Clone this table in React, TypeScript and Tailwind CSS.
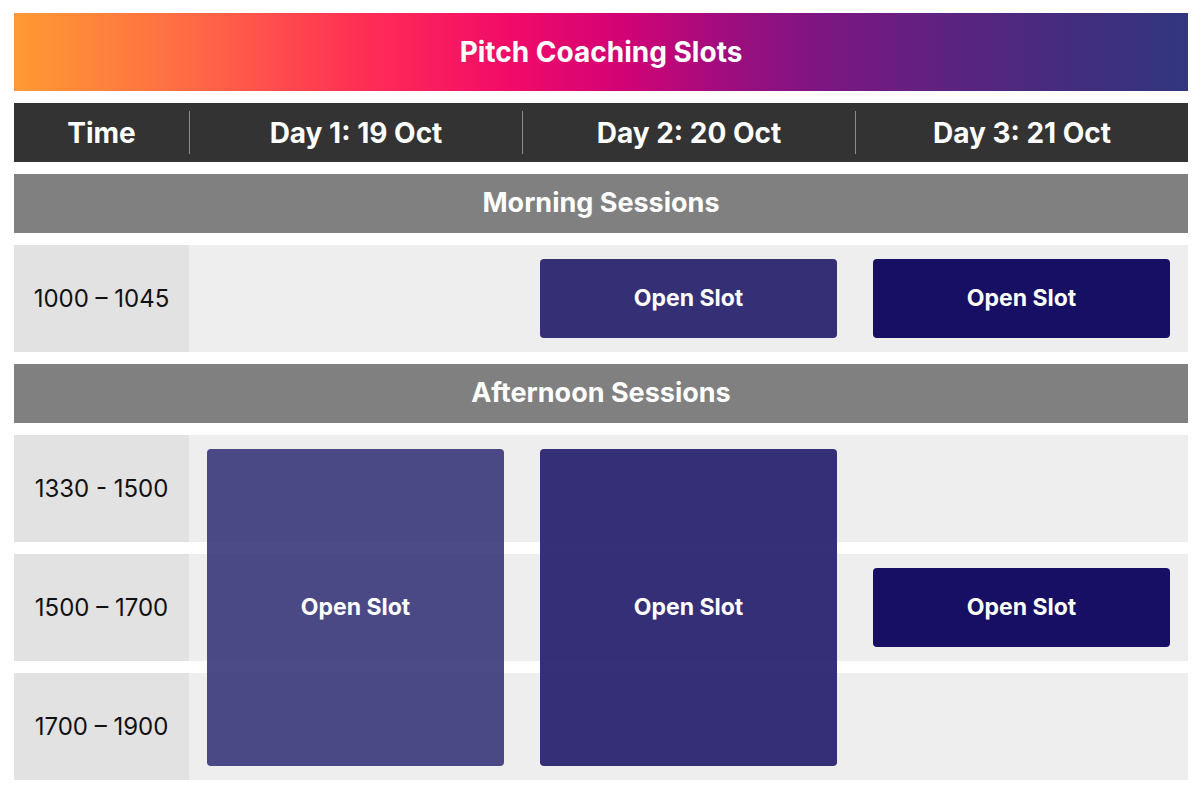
const days = ["Day 1: 19 Oct", "Day 2: 20 Oct", "Day 3: 21 Oct"];

const font = { fontFamily: "Inter, 'Open Sans', sans-serif" };

const SectionBar = ({ title }: { title: string }) => (
  <div className="h-[59px] bg-[#808080] flex items-center justify-center text-white font-bold text-[27px]">
    {title}
  </div>
);

const TimeCell = ({ label, className = "" }: { label: string; className?: string }) => (
  <div className={`bg-[#e2e2e2] flex items-center justify-center text-[24px] text-[#111] ${className}`}>
    {label}
  </div>
);

const Slot = ({ className = "" }: { className?: string }) => (
  <div className={`rounded-[4px] flex items-center justify-center text-white font-bold text-[23px] mx-[18px] ${className}`}>
    Open Slot
  </div>
);

export default function App() {
  return (
    <div className="w-[1200px] h-[794px] bg-white pl-[14px] pr-[12px] pt-[13px] overflow-hidden" style={font}>
      <div className="flex flex-col gap-[12px]">
        {/* Title */}
        <div className="h-[78px] flex items-center justify-center text-white font-bold text-[28px] bg-[linear-gradient(90deg,#ff9a33_0%,#ff6a45_15%,#ff2d55_30%,#f20b68_42%,#d20375_52%,#a30c7e_60%,#801582_68%,#5b2380_80%,#432c7d_90%,#32367f_100%)]">
          Pitch Coaching Slots
        </div>

        {/* Column headings */}
        <div className="h-[59px] bg-[#333333] grid grid-cols-[175px_1fr_1fr_1fr] text-white font-bold text-[28px]">
          <div className="flex items-center justify-center">Time</div>
          {days.map((d) => (
            <div key={d} className="my-[8px] border-l border-[#8c8c8c] flex items-center justify-center">
              {d}
            </div>
          ))}
        </div>

        <SectionBar title="Morning Sessions" />

        <div className="h-[107px] grid grid-cols-[175px_1fr_1fr_1fr] bg-[#eeeeee]">
          <TimeCell label="1000 – 1045" />
          <div />
          <Slot className="my-[14px] bg-[#352f76]" />
          <Slot className="my-[14px] bg-[#170f63]" />
        </div>

        <SectionBar title="Afternoon Sessions" />

        <div className="grid grid-cols-[175px_1fr_1fr_1fr] grid-rows-[107px_107px_107px] gap-y-[12px]">
          <TimeCell label="1330 - 1500" className="col-start-1 row-start-1" />
          <TimeCell label="1500 – 1700" className="col-start-1 row-start-2" />
          <TimeCell label="1700 – 1900" className="col-start-1 row-start-3" />
          <div className="col-start-2 col-span-3 row-start-1 bg-[#eeeeee]" />
          <div className="col-start-2 col-span-3 row-start-2 bg-[#eeeeee]" />
          <div className="col-start-2 col-span-3 row-start-3 bg-[#eeeeee]" />
          <Slot className="col-start-2 row-start-1 row-span-3 my-[14px] bg-[#2e2a73]/85 z-10" />
          <Slot className="col-start-3 row-start-1 row-span-3 my-[14px] bg-[#201a69]/90 z-10" />
          <Slot className="col-start-4 row-start-2 my-[14px] bg-[#170f63] z-10" />
        </div>
      </div>
    </div>
  );
}
